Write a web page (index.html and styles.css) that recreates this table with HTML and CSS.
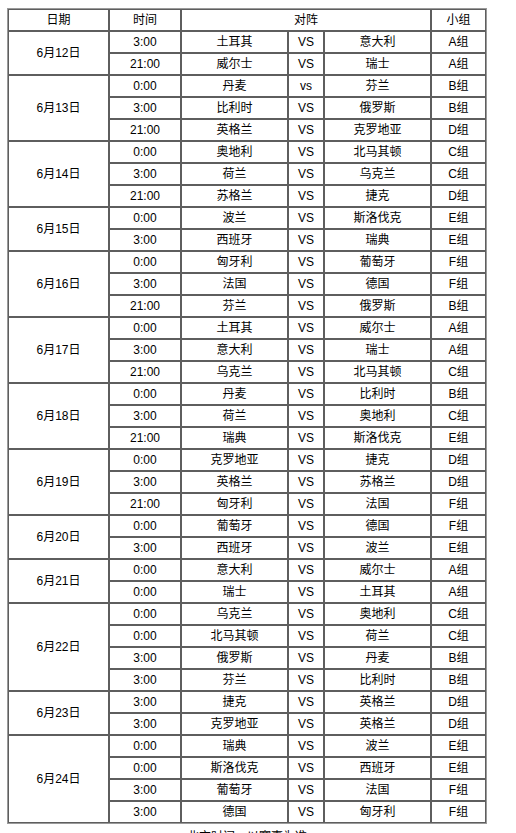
FILE: index.html
```html
<!DOCTYPE html>
<html lang="zh">
<head>
<meta charset="utf-8">
<title>赛程</title>
<link rel="stylesheet" href="styles.css">
</head>
<body>
<div class="wrap">
<table class="schedule">
<colgroup>
<col class="c-date"><col class="c-time"><col class="c-team"><col class="c-vs"><col class="c-team"><col class="c-group">
</colgroup>
<tr><th>日期</th><th>时间</th><th colspan="3">对阵</th><th>小组</th></tr>
<tr><td rowspan="2">6月12日</td><td>3:00</td><td>土耳其</td><td>VS</td><td>意大利</td><td>A组</td></tr>
<tr><td>21:00</td><td>威尔士</td><td>VS</td><td>瑞士</td><td>A组</td></tr>
<tr><td rowspan="3">6月13日</td><td>0:00</td><td>丹麦</td><td>vs</td><td>芬兰</td><td>B组</td></tr>
<tr><td>3:00</td><td>比利时</td><td>VS</td><td>俄罗斯</td><td>B组</td></tr>
<tr><td>21:00</td><td>英格兰</td><td>VS</td><td>克罗地亚</td><td>D组</td></tr>
<tr><td rowspan="3">6月14日</td><td>0:00</td><td>奥地利</td><td>VS</td><td>北马其顿</td><td>C组</td></tr>
<tr><td>3:00</td><td>荷兰</td><td>VS</td><td>乌克兰</td><td>C组</td></tr>
<tr><td>21:00</td><td>苏格兰</td><td>VS</td><td>捷克</td><td>D组</td></tr>
<tr><td rowspan="2">6月15日</td><td>0:00</td><td>波兰</td><td>VS</td><td>斯洛伐克</td><td>E组</td></tr>
<tr><td>3:00</td><td>西班牙</td><td>VS</td><td>瑞典</td><td>E组</td></tr>
<tr><td rowspan="3">6月16日</td><td>0:00</td><td>匈牙利</td><td>VS</td><td>葡萄牙</td><td>F组</td></tr>
<tr><td>3:00</td><td>法国</td><td>VS</td><td>德国</td><td>F组</td></tr>
<tr><td>21:00</td><td>芬兰</td><td>VS</td><td>俄罗斯</td><td>B组</td></tr>
<tr><td rowspan="3">6月17日</td><td>0:00</td><td>土耳其</td><td>VS</td><td>威尔士</td><td>A组</td></tr>
<tr><td>3:00</td><td>意大利</td><td>VS</td><td>瑞士</td><td>A组</td></tr>
<tr><td>21:00</td><td>乌克兰</td><td>VS</td><td>北马其顿</td><td>C组</td></tr>
<tr><td rowspan="3">6月18日</td><td>0:00</td><td>丹麦</td><td>VS</td><td>比利时</td><td>B组</td></tr>
<tr><td>3:00</td><td>荷兰</td><td>VS</td><td>奥地利</td><td>C组</td></tr>
<tr><td>21:00</td><td>瑞典</td><td>VS</td><td>斯洛伐克</td><td>E组</td></tr>
<tr><td rowspan="3">6月19日</td><td>0:00</td><td>克罗地亚</td><td>VS</td><td>捷克</td><td>D组</td></tr>
<tr><td>3:00</td><td>英格兰</td><td>VS</td><td>苏格兰</td><td>D组</td></tr>
<tr><td>21:00</td><td>匈牙利</td><td>VS</td><td>法国</td><td>F组</td></tr>
<tr><td rowspan="2">6月20日</td><td>0:00</td><td>葡萄牙</td><td>VS</td><td>德国</td><td>F组</td></tr>
<tr><td>3:00</td><td>西班牙</td><td>VS</td><td>波兰</td><td>E组</td></tr>
<tr><td rowspan="2">6月21日</td><td>0:00</td><td>意大利</td><td>VS</td><td>威尔士</td><td>A组</td></tr>
<tr><td>0:00</td><td>瑞士</td><td>VS</td><td>土耳其</td><td>A组</td></tr>
<tr><td rowspan="4">6月22日</td><td>0:00</td><td>乌克兰</td><td>VS</td><td>奥地利</td><td>C组</td></tr>
<tr><td>0:00</td><td>北马其顿</td><td>VS</td><td>荷兰</td><td>C组</td></tr>
<tr><td>3:00</td><td>俄罗斯</td><td>VS</td><td>丹麦</td><td>B组</td></tr>
<tr><td>3:00</td><td>芬兰</td><td>VS</td><td>比利时</td><td>B组</td></tr>
<tr><td rowspan="2">6月23日</td><td>3:00</td><td>捷克</td><td>VS</td><td>英格兰</td><td>D组</td></tr>
<tr><td>3:00</td><td>克罗地亚</td><td>VS</td><td>英格兰</td><td>D组</td></tr>
<tr><td rowspan="4">6月24日</td><td>0:00</td><td>瑞典</td><td>VS</td><td>波兰</td><td>E组</td></tr>
<tr><td>0:00</td><td>斯洛伐克</td><td>VS</td><td>西班牙</td><td>E组</td></tr>
<tr><td>3:00</td><td>葡萄牙</td><td>VS</td><td>法国</td><td>F组</td></tr>
<tr><td>3:00</td><td>德国</td><td>VS</td><td>匈牙利</td><td>F组</td></tr>
</table>
<p class="note">北京时间，以赛事为准</p>
</div>
</body>
</html>
```

FILE: styles.css
```css
html, body {
  margin: 0;
  padding: 0;
  background: #ffffff;
}

body {
  font-family: "Liberation Sans", "Noto Sans CJK SC", sans-serif;
  font-size: 12px;
  color: #000000;
}

.wrap {
  width: 480px;
  padding: 8px 0 0 7px;
}

.schedule {
  width: 480px;
  table-layout: fixed;
  border-collapse: separate;
  border-spacing: 0;
  border: 1px solid #9a9a9a;
}

.c-date { width: 101px; }
.c-time { width: 72px; }
.c-team { width: 107px; }
.c-vs { width: 36px; }
.c-group { width: 55px; }

.schedule th,
.schedule td {
  box-sizing: border-box;
  height: 22px;
  padding: 0;
  line-height: 20px;
  border: 1px solid #5e5e5e;
  text-align: center;
  vertical-align: middle;
  font-weight: normal;
  white-space: nowrap;
}

.note {
  margin: 5px 0 0 0;
  line-height: 16px;
  text-align: center;
}
```
